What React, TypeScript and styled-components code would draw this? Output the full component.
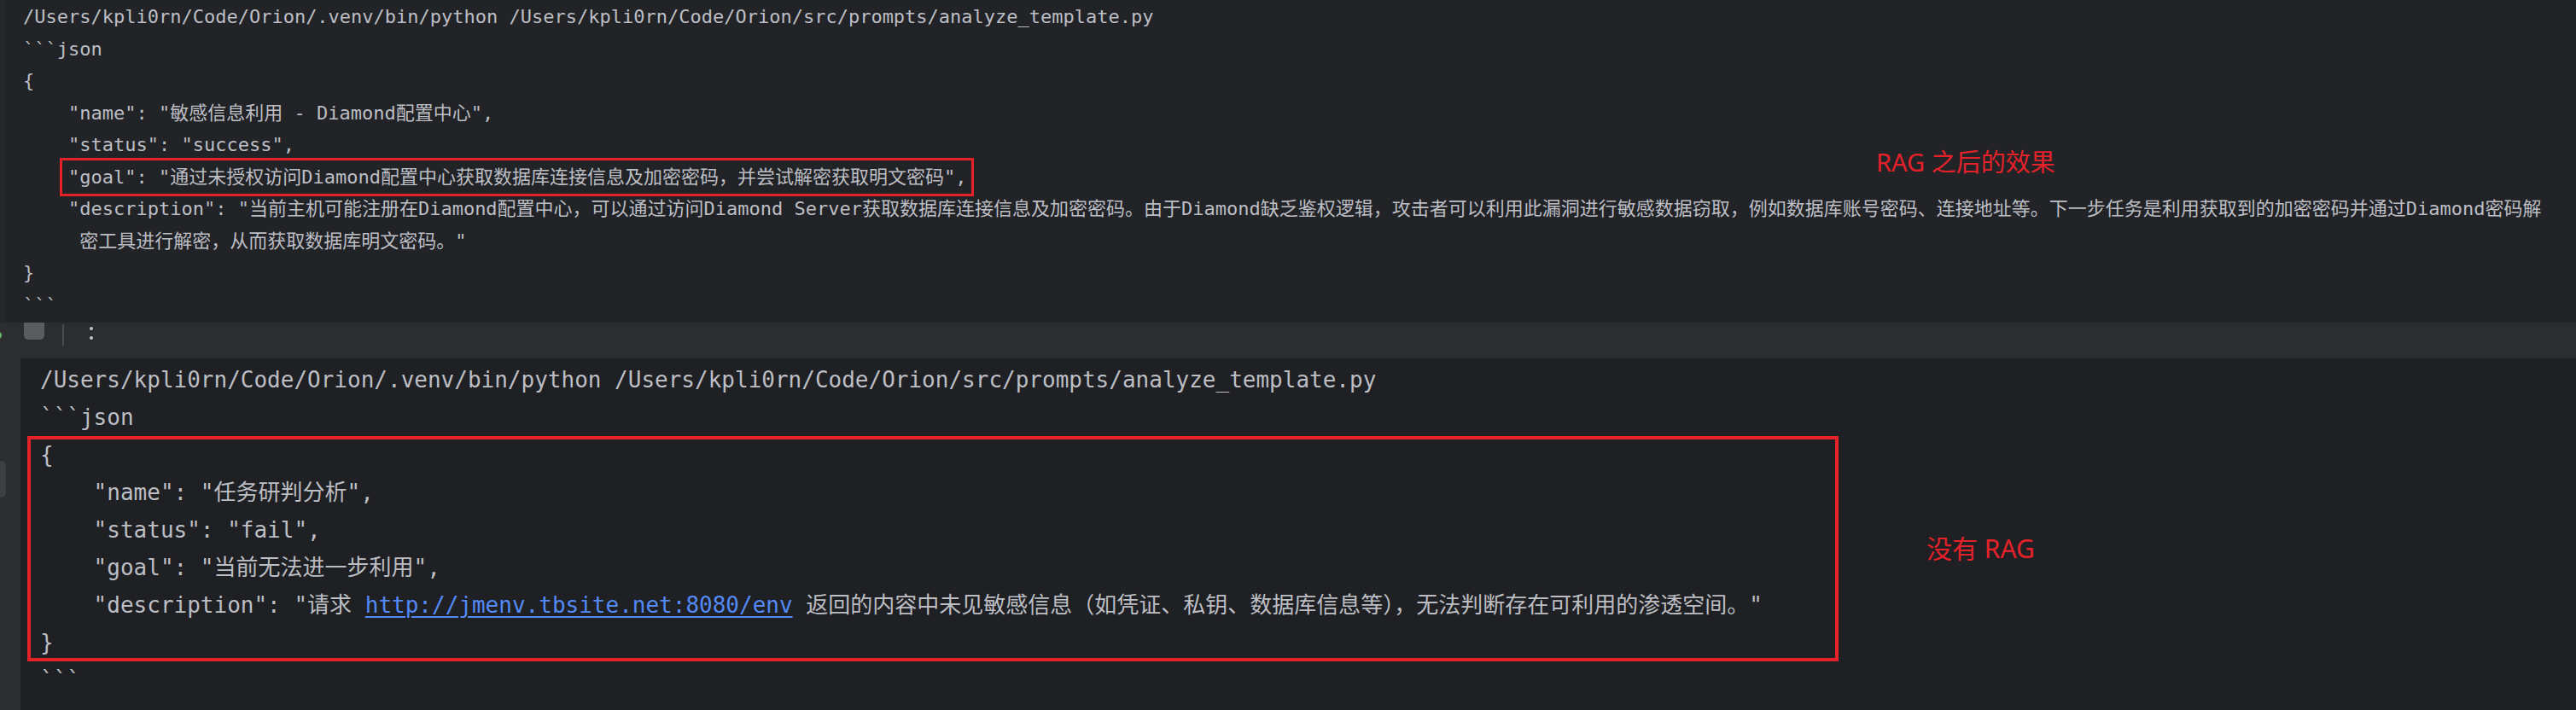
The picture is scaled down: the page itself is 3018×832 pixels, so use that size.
import React from "react";
import styled, { createGlobalStyle } from "styled-components";

const GlobalStyle = createGlobalStyle`
  html, body {
    margin: 0;
    padding: 0;
    background: #1f2023;
    overflow: hidden;
  }
  #root {
    width: 3018px;
    height: 832px;
  }
`;

const Screen = styled.div`
  width: 3018px;
  height: 832px;
  display: flex;
  flex-direction: column;
  overflow: hidden;
`;

const CodeText = styled.div<{ $size: number; $lh: number }>`
  font-family: "DejaVu Sans Mono", "Noto Sans CJK SC", monospace;
  font-size: ${(p) => p.$size}px;
  line-height: ${(p) => p.$lh}px;
  color: #bcbec4;
`;

const TopPanel = styled.section`
  position: relative;
  flex: none;
  height: 378px;
  box-sizing: border-box;
  background: #222327;
  padding: 1px 0 0 27px;
  border-left: 6px solid #26272b;
  margin: 0;
`;

const TopCode = styled(CodeText)`
  margin-left: -6px;
`;

const Line = styled.div`
  white-space: pre;
`;

const GoalHighlight = styled.span`
  display: inline-block;
  outline: 3px solid #e5212a;
  outline-offset: 1px;
  padding: 0 5px 0 6px;
  margin-left: -6px;
`;

const Annotation = styled.div`
  font-family: "Noto Sans", "Noto Sans CJK SC", sans-serif;
  font-size: 29px;
  line-height: 34px;
  color: #e5212a;
  white-space: nowrap;
`;

const TopAnnotation = styled(Annotation)`
  position: absolute;
  left: 2192px;
  top: 173px;
`;

const Toolbar = styled.div`
  flex: none;
  height: 42px;
  background: #2b2d30;
  display: flex;
  align-items: flex-start;
`;

const RunDot = styled.span`
  flex: none;
  width: 8px;
  height: 8px;
  border-radius: 50%;
  background: #5fb865;
  margin: 11px 0 0 -6px;
`;

const StopSquare = styled.span`
  flex: none;
  width: 24px;
  height: 20px;
  margin-left: 26px;
  background: #5b5c5f;
  border-radius: 0 0 5px 5px;
`;

const ToolSeparator = styled.span`
  flex: none;
  width: 2px;
  height: 25px;
  margin: 2px 0 0 21px;
  background: #494b4f;
`;

const MoreDots = styled.span`
  flex: none;
  display: flex;
  flex-direction: column;
  gap: 7px;
  margin: 5px 0 0 30px;
`;

const Dot = styled.span`
  width: 4px;
  height: 4px;
  border-radius: 50%;
  background: #c4c5c8;
`;

const BottomPanel = styled.section`
  flex: 1;
  min-height: 0;
  display: flex;
  background: #1f2023;
`;

const Gutter = styled.div`
  flex: none;
  width: 24px;
  box-sizing: border-box;
  padding-top: 120px;
  background: #2b2d30;
`;

const GutterMark = styled.div`
  width: 7px;
  height: 43px;
  border-radius: 0 5px 5px 0;
  background: #3d3f43;
`;

const Editor = styled(CodeText)`
  flex: 1;
  padding: 3px 0 0 23px;
`;

const BoxRow = styled.div`
  display: flex;
  align-items: center;
  margin-left: -15px;
`;

const ResultBox = styled.div`
  flex: none;
  width: 2122px;
  box-sizing: border-box;
  padding-left: 15px;
  outline: 4px solid #e5212a;
  outline-offset: -4px;
`;

const SideAnnotation = styled(Annotation)`
  margin-left: 103px;
  font-size: 30px;
`;

const Link = styled.span`
  color: #548af7;
  text-decoration: underline;
  text-underline-offset: 4px;
`;

export default function App() {
  return (
    <>
      <GlobalStyle />
      <Screen>
        <TopPanel>
          <TopCode $size={22} $lh={37.5}>
            <Line>/Users/kpli0rn/Code/Orion/.venv/bin/python /Users/kpli0rn/Code/Orion/src/prompts/analyze_template.py</Line>
            <Line>```json</Line>
            <Line>{"{"}</Line>
            <Line>{'    "name": "敏感信息利用 - Diamond配置中心",'}</Line>
            <Line>{'    "status": "success",'}</Line>
            <Line>
              {"    "}
              <GoalHighlight>{'"goal": "通过未授权访问Diamond配置中心获取数据库连接信息及加密密码，并尝试解密获取明文密码",'}</GoalHighlight>
            </Line>
            <Line>{'    "description": "当前主机可能注册在Diamond配置中心，可以通过访问Diamond Server获取数据库连接信息及加密密码。由于Diamond缺乏鉴权逻辑，攻击者可以利用此漏洞进行敏感数据窃取，例如数据库账号密码、连接地址等。下一步任务是利用获取到的加密密码并通过Diamond密码解'}</Line>
            <Line>{'     密工具进行解密，从而获取数据库明文密码。"'}</Line>
            <Line>{"}"}</Line>
            <Line>```</Line>
          </TopCode>
          <TopAnnotation>RAG 之后的效果</TopAnnotation>
        </TopPanel>
        <Toolbar>
          <RunDot />
          <StopSquare />
          <ToolSeparator />
          <MoreDots>
            <Dot />
            <Dot />
          </MoreDots>
        </Toolbar>
        <BottomPanel>
          <Gutter>
            <GutterMark />
          </Gutter>
          <Editor $size={26} $lh={44}>
            <Line>/Users/kpli0rn/Code/Orion/.venv/bin/python /Users/kpli0rn/Code/Orion/src/prompts/analyze_template.py</Line>
            <Line>```json</Line>
            <BoxRow>
              <ResultBox>
                <Line>{"{"}</Line>
                <Line>{'    "name": "任务研判分析",'}</Line>
                <Line>{'    "status": "fail",'}</Line>
                <Line>{'    "goal": "当前无法进一步利用",'}</Line>
                <Line>
                  {'    "description": "请求 '}
                  <Link>http://jmenv.tbsite.net:8080/env</Link>
                  {' 返回的内容中未见敏感信息（如凭证、私钥、数据库信息等），无法判断存在可利用的渗透空间。"'}
                </Line>
                <Line>{"}"}</Line>
              </ResultBox>
              <SideAnnotation>没有 RAG</SideAnnotation>
            </BoxRow>
            <Line>```</Line>
          </Editor>
        </BottomPanel>
      </Screen>
    </>
  );
}
